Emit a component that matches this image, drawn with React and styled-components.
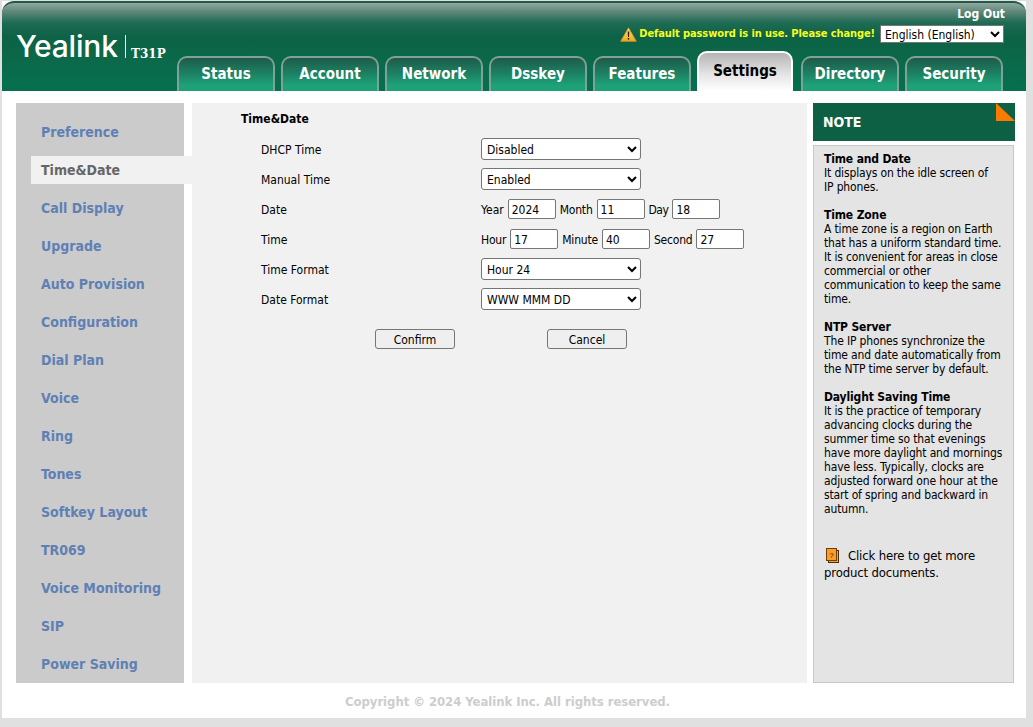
import React from 'react'
import styled, { createGlobalStyle } from 'styled-components';

const TAHOMA = '"DejaVu Sans Condensed", "DejaVu Sans", sans-serif';

const GlobalStyle = createGlobalStyle`
body {
    margin: 0;
    background-color: #e0e0e0;
    font-family: ${TAHOMA};
    font-size: 12px;
    color: #000;
}
`;

const tabs = ['Status', 'Account', 'Network', 'Dsskey', 'Features', 'Settings', 'Directory', 'Security'];
const menu = ['Preference', 'Time&Date', 'Call Display', 'Upgrade', 'Auto Provision', 'Configuration', 'Dial Plan', 'Voice', 'Ring', 'Tones', 'Softkey Layout', 'TR069', 'Voice Monitoring', 'SIP', 'Power Saving'];

const notes = [
    { title: 'Time and Date', lines: ['It displays on the idle screen of', 'IP phones.'] },
    { title: 'Time Zone', lines: ['A time zone is a region on Earth', 'that has a uniform standard time.', 'It is convenient for areas in close', 'commercial or other', 'communication to keep the same', 'time.'] },
    { title: 'NTP Server', lines: ['The IP phones synchronize the', 'time and date automatically from', 'the NTP time server by default.'] },
    { title: 'Daylight Saving Time', lines: ['It is the practice of temporary', 'advancing clocks during the', 'summer time so that evenings', 'have more daylight and mornings', 'have less. Typically, clocks are', 'adjusted forward one hour at the', 'start of spring and backward in', 'autumn.'] },
];

const WarnIcon = () => (
    <svg width="17" height="15" viewBox="0 0 17 15">
        <defs>
            <linearGradient id="warn" x1="0" y1="0" x2="0" y2="1">
                <stop offset="0" stopColor="#fde07a" />
                <stop offset="1" stopColor="#f2a81e" />
            </linearGradient>
        </defs>
        <path d="M8.5 0.8 L16.3 14.3 H0.7 Z" fill="url(#warn)" stroke="#d8981c" strokeWidth="0.8" strokeLinejoin="round" />
        <path d="M7.7 4.5 H9.3 L9 10 H8 Z" fill="#2b2000" />
        <rect x="7.8" y="11" width="1.4" height="1.6" fill="#2b2000" />
    </svg>
);

const DocIcon = () => (
    <svg width="14" height="15" viewBox="0 0 14 15">
        <rect x="3.5" y="2.5" width="10" height="12" fill="#f5a63a" stroke="#4a2c08" />
        <rect x="1.5" y="0.5" width="10" height="12" fill="#fb9d26" stroke="#6a4010" />
        <text x="6.5" y="9.5" fontSize="8" textAnchor="middle" fill="#3a2208" fontFamily="Liberation Sans, sans-serif">?</text>
    </svg>
);

const App = () => {
    return (
        <Page>
            <GlobalStyle />
            <Header>
                <Brand>
                    <Logo>Yealink</Logo>
                    <Model>T31P</Model>
                </Brand>
                <HeaderRight>
                    <LogOut>Log Out</LogOut>
                    <WarnRow>
                        <WarnIcon />
                        <WarnText>Default password is in use. Please change!</WarnText>
                        <LangSelect defaultValue="en">
                            <option value="en">English (English)</option>
                        </LangSelect>
                    </WarnRow>
                    <TabBar>
                        {tabs.map((t) => (
                            <Tab key={t} $active={t === 'Settings'}>{t}</Tab>
                        ))}
                    </TabBar>
                </HeaderRight>
            </Header>
            <Body>
                <Sidebar>
                    {menu.map((m) => (
                        <MenuItem key={m} $active={m === 'Time&Date'}>{m}</MenuItem>
                    ))}
                </Sidebar>
                <Main>
                    <FormTitle>Time&amp;Date</FormTitle>
                    <Row>
                        <Label>DHCP Time</Label>
                        <Select defaultValue="Disabled"><option>Disabled</option><option>Enabled</option></Select>
                    </Row>
                    <Row>
                        <Label>Manual Time</Label>
                        <Select defaultValue="Enabled"><option>Disabled</option><option>Enabled</option></Select>
                    </Row>
                    <Row>
                        <Label>Date</Label>
                        <Fields>
                            <FieldName $spacing={0}>Year</FieldName><Input defaultValue="2024" />
                            <FieldName>Month</FieldName><Input defaultValue="11" />
                            <FieldName $spacing={-0.5}>Day</FieldName><Input defaultValue="18" />
                        </Fields>
                    </Row>
                    <Row>
                        <Label>Time</Label>
                        <Fields>
                            <FieldName>Hour</FieldName><Input defaultValue="17" />
                            <FieldName>Minute</FieldName><Input defaultValue="40" />
                            <FieldName>Second</FieldName><Input defaultValue="27" />
                        </Fields>
                    </Row>
                    <Row>
                        <Label>Time Format</Label>
                        <Select defaultValue="Hour 24"><option>Hour 12</option><option>Hour 24</option></Select>
                    </Row>
                    <Row>
                        <Label>Date Format</Label>
                        <Select defaultValue="WWW MMM DD"><option>WWW MMM DD</option></Select>
                    </Row>
                    <Buttons>
                        <Button>Confirm</Button>
                        <Button>Cancel</Button>
                    </Buttons>
                </Main>
                <NoteColumn>
                    <NoteHead>NOTE<NoteCorner /></NoteHead>
                    <NoteBody>
                        {notes.map((n) => (
                            <NoteBlock key={n.title}>
                                <NoteTitle>{n.title}</NoteTitle>
                                {n.lines.map((l) => <div key={l}>{l}</div>)}
                            </NoteBlock>
                        ))}
                        <DocLink>
                            <DocLine>
                                <DocIcon />
                                <span>Click here to get more</span>
                            </DocLine>
                            <div>product documents.</div>
                        </DocLink>
                    </NoteBody>
                </NoteColumn>
            </Body>
            <Footer>Copyright © 2024 Yealink Inc. All rights reserved.</Footer>
        </Page>
    )
}

export default App;

const Page = styled.div`
width: 1024px;
height: 717px;
margin: 1px 0 0 2px;
background-color: white;
`;
const Header = styled.div`
height: 90px;
box-sizing: border-box;
display: flex;
border-top: 2px solid #24584a;
border-radius: 12px 12px 0 0;
background: linear-gradient(to bottom, #8fa8a0 0, #62897c 8px, #1d6a53 20px, #0d6246 34px, #0a6a4a 60px, #04704f 90px);
`;
const Brand = styled.div`
width: 175px;
padding: 23px 0 0 14px;
box-sizing: border-box;
display: flex;
align-items: flex-start;
color: white;
`;
const Logo = styled.div`
font-family: Inter, sans-serif;
font-weight: 500;
font-size: 30px;
letter-spacing: -0.2px;
line-height: 40px;
width: 110px;
flex-shrink: 0;
position: relative;
&::after {
    content: '';
    position: absolute;
    right: 0;
    top: 9px;
    height: 23px;
    width: 1px;
    background: white;
}
`;
const Model = styled.div`
font-family: "DejaVu Serif", serif;
font-weight: bold;
font-size: 12px;
padding: 21px 0 0 5px;
`;
const HeaderRight = styled.div`
flex: 1;
display: flex;
flex-direction: column;
align-items: stretch;
min-width: 0;
`;
const LogOut = styled.div`
height: 21px;
padding: 3px 21px 0 0;
box-sizing: border-box;
text-align: right;
color: white;
font-weight: bold;
font-size: 12px;
line-height: 16px;
`;
const WarnRow = styled.div`
height: 20px;
padding-right: 22px;
display: flex;
justify-content: flex-end;
align-items: center;
`;
const WarnText = styled.span`
color: #f5ff1e;
font-weight: bold;
font-size: 11px;
letter-spacing: -0.1px;
margin: 0 5px 2px 2px;
`;
const LangSelect = styled.select`
width: 124px;
height: 18px;
font-family: ${TAHOMA};
font-size: 12px;
background: white;
border: 1px solid #767676;
padding: 1px 0 0;
`;
const TabBar = styled.div`
margin-top: auto;
display: flex;
align-items: flex-end;
`;
const Tab = styled.div`
box-sizing: border-box;
width: ${(p) => (p.$active ? '96px' : '98px')};
height: ${(p) => (p.$active ? '40px' : '35px')};
margin-left: 6px;
margin-right: ${(p) => (p.$active ? '2px' : '0')};
padding-top: ${(p) => (p.$active ? '9px' : '7px')};
text-align: center;
font-weight: bold;
font-size: 15px;
line-height: 19px;
border-radius: 10px 10px 0 0;
border: 2px solid ${(p) => (p.$active ? '#fff' : '#7fa198')};
border-bottom: 0;
color: ${(p) => (p.$active ? '#000' : '#fff')};
background: ${(p) => (p.$active
        ? 'linear-gradient(to bottom, #b4b4b4 0, #e6e6e6 22px, #fff 38px)'
        : 'linear-gradient(to bottom, #1e5a48 0, #1c8264 16px, #1da177 27px)')};
&:first-child { margin-left: 0; }
`;
const Body = styled.div`
display: flex;
padding: 12px 11px 0 14px;
height: 580px;
`;
const Sidebar = styled.div`
width: 168px;
padding: 15px 0 0 15px;
box-sizing: border-box;
background-color: #cbcbcb;
display: flex;
flex-direction: column;
gap: 10px;
margin-right: 8px;
`;
const MenuItem = styled.div`
width: 161px;
height: 28px;
padding-left: 10px;
box-sizing: border-box;
flex-shrink: 0;
font-weight: bold;
font-size: 14px;
line-height: 28px;
color: ${(p) => (p.$active ? '#666' : '#5f80b4')};
background-color: ${(p) => (p.$active ? '#f1f1f1' : 'transparent')};
`;
const Main = styled.div`
width: 615px;
padding: 8px 0 0 49px;
box-sizing: border-box;
background-color: #f1f1f1;
margin-right: 6px;
`;
const FormTitle = styled.div`
font-weight: bold;
font-size: 12px;
line-height: 15px;
height: 23px;
box-sizing: border-box;
padding-top: 1px;
`;
const Row = styled.div`
height: 30px;
display: flex;
align-items: center;
padding-left: 20px;
`;
const Label = styled.div`
width: 220px;
padding-top: 2px;
`;
const Select = styled.select`
width: 160px;
height: 22px;
font-family: ${TAHOMA};
font-size: 12px;
background: white;
border: 1px solid #767676;
border-radius: 3px;
padding: 2px 0 0 1px;
`;
const Fields = styled.div`
display: flex;
align-items: center;
gap: 4px;
`;
const FieldName = styled.span`
letter-spacing: ${(p) => (p.$spacing ?? -0.2)}px;
padding-top: 2px;
`;
const Input = styled.input`
width: 48px;
height: 20px;
box-sizing: border-box;
font-family: ${TAHOMA};
font-size: 12px;
border: 1px solid #767676;
border-radius: 2px;
padding: 2px 3px 0;
`;
const Buttons = styled.div`
display: flex;
gap: 92px;
padding: 15px 0 0 134px;
`;
const Button = styled.button`
width: 80px;
height: 20px;
font-family: ${TAHOMA};
font-size: 12px;
background: #efefef;
border: 1px solid #767676;
border-radius: 3px;
padding: 1px 0 0;
`;
const NoteColumn = styled.div`
width: 202px;
display: flex;
flex-direction: column;
`;
const NoteHead = styled.div`
height: 38px;
flex-shrink: 0;
position: relative;
background-color: #0e6044;
color: white;
font-weight: bold;
font-size: 14px;
line-height: 39px;
padding-left: 10px;
margin-bottom: 4px;
`;
const NoteCorner = styled.div`
position: absolute;
right: 0;
top: 0;
width: 19px;
height: 18px;
background: #fb7a00;
clip-path: polygon(0 0, 100% 100%, 0 100%);
`;
const NoteBody = styled.div`
flex: 1;
width: 201px;
box-sizing: border-box;
background-color: #e4e4e4;
border: 1px solid #c8c8c8;
padding: 6px 0 0 10px;
line-height: 14px;
letter-spacing: -0.15px;
white-space: nowrap;
color: #000;
`;
const NoteBlock = styled.div`
margin-bottom: 14px;
`;
const NoteTitle = styled.div`
font-weight: bold;
`;
const DocLink = styled.div`
margin-top: 31px;
font-size: 13px;
line-height: 17px;
`;
const DocLine = styled.div`
display: flex;
align-items: center;
gap: 9px;
padding-left: 1px;
`;
const Footer = styled.div`
text-align: center;
font-weight: bold;
font-size: 13px;
letter-spacing: -0.05px;
color: #cdcdcd;
line-height: 18px;
padding: 10px 13px 0 0;
`;
